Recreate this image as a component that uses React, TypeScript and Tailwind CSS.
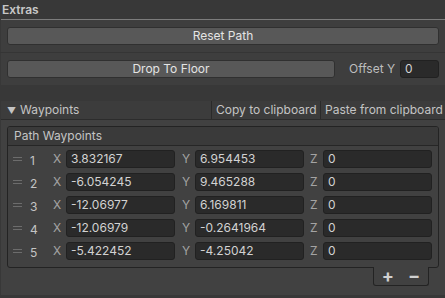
import React from "react";

const rows = [
  ["1", "3.832167", "6.954453", "0"],
  ["2", "-6.054245", "9.465288", "0"],
  ["3", "-12.06977", "6.169811", "0"],
  ["4", "-12.06979", "-0.2641964", "0"],
  ["5", "-5.422452", "-4.25042", "0"],
];

function Field({ label, value, gap }: { label: string; value: string; gap: string }) {
  return (
    <div className={`flex items-center h-[18px] ${gap}`}>
      <div className="w-[13px] text-[#a4a4a4] leading-none">{label}</div>
      <div className="w-[109px] h-[18px] bg-[#2a2a2a] border border-[#212121] rounded-[3px] pl-[4px] flex items-center text-[#d2d2d2] leading-none">
        {value}
      </div>
    </div>
  );
}

export default function App() {
  return (
    <div
      className="w-[445px] h-[298px] bg-[#383838] text-[#c4c4c4] text-[12px] overflow-hidden flex flex-col"
      style={{ fontFamily: "Inter, 'Noto Sans', sans-serif" }}
    >
      <div className="h-[19px] pl-[2px] flex items-center font-semibold text-[#c8c8c8] leading-none">Extras</div>
      <div className="ml-[1px] h-[1px] bg-[#7c7c7c]" />
      <div className="ml-[1px] h-[32px] bg-[#3e3e3e] px-[6px] pt-[7px]">
        <div className="h-[18px] bg-[#585858] border border-[#303030] rounded-[3px] flex items-center justify-center text-[#e4e4e4] leading-none">
          Reset Path
        </div>
      </div>
      <div className="h-[1px] bg-[#353535]" />
      <div className="ml-[1px] h-[32px] bg-[#3e3e3e] pl-[6px] pr-[6px] pt-[7px] flex items-start">
        <div className="w-[328px] h-[18px] bg-[#585858] border border-[#303030] rounded-[3px] flex items-center justify-center text-[#e4e4e4] leading-none">
          Drop To Floor
        </div>
        <div className="ml-[14px] w-[51px] h-[18px] flex items-center text-[#bdbdbd] leading-none">Offset Y</div>
        <div className="w-[39px] h-[18px] bg-[#2a2a2a] border border-[#212121] rounded-[3px] pl-[4px] flex items-center text-[#d2d2d2] leading-none">
          0
        </div>
      </div>
      <div className="h-[16px]" />
      <div className="ml-[1px] h-[18px] bg-[#3c3c3c] flex items-center leading-none">
        <div className="w-[210px] flex items-center pl-[6px]">
          <span className="text-[9px] mr-[4px] text-[#c4c4c4]">▼</span>
          <span>Waypoints</span>
        </div>
        <div className="w-[1px] h-[18px] bg-[#2a2a2a]" />
        <div className="w-[108px] pl-[4px]">Copy to clipboard</div>
        <div className="w-[1px] h-[18px] bg-[#2a2a2a]" />
        <div className="pl-[4px] whitespace-nowrap">Paste from clipboard</div>
      </div>
      <div className="ml-[1px] h-[1px] bg-[#2c2c2c]" />
      <div className="ml-[1px] h-[175px] bg-[#414141] pt-[6px] pl-[6px] pr-[6px] flex flex-col">
        <div className="h-[142px] border border-[#232323] rounded-[3px] flex flex-col overflow-hidden">
          <div className="h-[19px] bg-[#3a3a3a] border-b border-[#262626] pl-[6px] flex items-center text-[#c4c4c4] leading-none">
            Path Waypoints
          </div>
          <div className="pt-[4px] flex flex-col gap-[5px]">
            {rows.map((r) => (
              <div key={r[0]} className="flex items-center h-[18px]">
                <div className="ml-[5px] w-[9px] flex flex-col gap-[2px]">
                  <div className="h-[1px] bg-[#6c6c6c]" />
                  <div className="h-[1px] bg-[#6c6c6c]" />
                </div>
                <div className="ml-[8px] w-[23px] pt-[3px] leading-none text-[#c4c4c4]">{r[0]}</div>
                <Field label="X" value={r[1]} gap="" />
                <Field label="Y" value={r[2]} gap="ml-[7px]" />
                <Field label="Z" value={r[3]} gap="ml-[6px]" />
              </div>
            ))}
          </div>
        </div>
        <div className="flex justify-end pr-[10px]">
          <div className="w-[56px] h-[19px] -mt-[1px] border border-t-0 border-[#232323] rounded-b-[3px] bg-[#414141] flex items-center justify-center gap-[14px] text-[#d0d0d0] text-[18px] font-bold leading-none">
            <span>+</span>
            <span>−</span>
          </div>
        </div>
      </div>
    </div>
  );
}
